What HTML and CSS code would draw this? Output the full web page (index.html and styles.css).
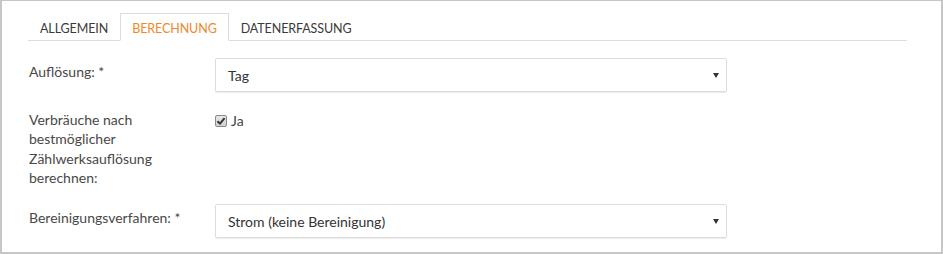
FILE: index.html
```html
<!DOCTYPE html>
<html lang="de">

<head>
    <meta charset="UTF-8">
    <title>Berechnung</title>
    <link rel="stylesheet" href="styles.css">
</head>

<body>
    <div class="panel">
        <ul class="tabs">
            <li class="tab">ALLGEMEIN</li>
            <li class="tab active">BERECHNUNG</li>
            <li class="tab">DATENERFASSUNG</li>
        </ul>

        <form class="form">
            <div class="form-row">
                <label class="form-label">Auflösung: *</label>
                <div class="select-wrap">
                    <select class="select">
                        <option>Tag</option>
                    </select>
                    <span class="caret"></span>
                </div>
            </div>

            <div class="form-row tall">
                <label class="form-label">Verbräuche nach bestmöglicher Zählwerksauflösung berechnen:</label>
                <label class="check">
                    <span class="check-box">
                        <svg width="10" height="10" viewBox="0 0 10 10">
                            <path d="M1.5 5.2 L4 7.6 L8.6 2.2" fill="none" stroke="#333" stroke-width="2" />
                        </svg>
                    </span>
                    Ja
                </label>
            </div>

            <div class="form-row">
                <label class="form-label">Bereinigungsverfahren: *</label>
                <div class="select-wrap">
                    <select class="select">
                        <option>Strom (keine Bereinigung)</option>
                    </select>
                    <span class="caret"></span>
                </div>
            </div>
        </form>
    </div>
</body>

</html>
```

FILE: styles.css
```css
* {
    margin: 0;
    padding: 0;
    box-sizing: border-box;
}

body {
    background: #fff;
    font-family: 'Lato', sans-serif;
    font-size: 14px;
    color: #444;
}

.panel {
    width: 943px;
    height: 254px;
    border: 2px solid #c6c6c6;
    border-top-width: 1px;
    padding: 12px 34px 0 26px;
}

/* Tabs */
.tabs {
    list-style: none;
    display: flex;
    border-bottom: 1px solid #ddd;
}

.tab {
    padding: 5px 11px 1px;
    line-height: 20px;
    font-size: 12.5px;
    letter-spacing: -0.1px;
    border: 1px solid transparent;
    margin-bottom: -1px;
    color: #3a3a3a;
}

.tab.active {
    border-color: #ddd;
    border-bottom-color: #fff;
    color: #f0882b;
}

/* Formular */
.form {
    padding: 17px 0 0 1px;
}

.form-row {
    display: flex;
    margin-bottom: 14px;
}

.form-row.tall {
    margin-bottom: 17px;
}

.form-label {
    width: 186px;
    padding: 4px 16px 0 0;
    line-height: 19.3px;
    color: #484848;
}

.select-wrap {
    position: relative;
    width: 512px;
}

.select {
    appearance: none;
    -webkit-appearance: none;
    width: 100%;
    height: 34px;
    padding: 0 12px;
    border: 1px solid #ddd;
    border-radius: 2px;
    box-shadow: 0 1px 1px rgba(0, 0, 0, 0.08);
    background: #fff;
    font-family: 'Lato', sans-serif;
    font-size: 14px;
    color: #333;
}

.caret {
    position: absolute;
    right: 8px;
    top: 15px;
    border-left: 3px solid transparent;
    border-right: 3px solid transparent;
    border-top: 5px solid #333;
}

.check {
    display: flex;
    align-items: center;
    gap: 4px;
    padding-top: 5px;
    height: 24px;
    color: #444;
}

.check-box {
    width: 12px;
    height: 12px;
    border: 1px solid #8a8a8a;
    border-radius: 2px;
    background: linear-gradient(#e8e8e8, #cfcfcf);
    display: flex;
    align-items: center;
    justify-content: center;
}
```
